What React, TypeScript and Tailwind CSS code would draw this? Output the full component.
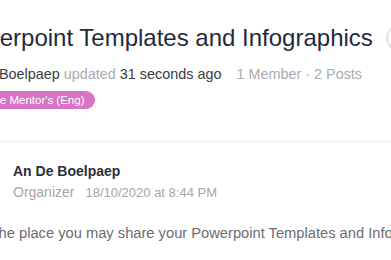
import React from "react";

export default function App() {
  return (
    <div
      className="w-[391px] h-[260px] overflow-hidden bg-white relative"
      style={{ fontFamily: "'Liberation Sans', Arial, sans-serif" }}
    >
      <div className="-ml-[47px] w-[700px]">
        <div className="flex items-center pt-[23px]">
          <h1 className="text-[24px] leading-[30px] font-normal text-[#1f2b3c] whitespace-nowrap">
            Powerpoint Templates and Infographics
          </h1>
          <div className="ml-[13px] w-[26px] h-[26px] rounded-full border-2 border-[#e4e4e4] shrink-0" />
        </div>
        <div className="mt-[11px] ml-[2px] flex items-center text-[14.4px] leading-[20px] whitespace-nowrap">
          <span className="text-[#3a3d42]">An De Boelpaep</span>
          <span className="ml-[4px] text-[#a9abb0]">updated</span>
          <span className="ml-[4px] text-[#3a3d42]">31 seconds ago</span>
          <span className="ml-[15px] text-[#a9abb0]">1 Member · 2 Posts</span>
        </div>
        <div className="mt-[7px] flex">
          <span className="rounded-full bg-[#d874c6] text-white text-[11.5px] leading-[18px] pl-[20px] pr-[10px] whitespace-nowrap">
            Online Mentor's (Eng)
          </span>
        </div>
        <div className="mt-[32px] h-px bg-[#ececec] w-[800px]" />
        <div className="flex pt-[19px] pl-[60px]">
          <div>
            <div className="text-[14px] leading-[20px] font-bold text-[#2c3038] whitespace-nowrap">
              An De Boelpaep
            </div>
            <div className="mt-[1px] flex items-baseline text-[#a4a6aa] whitespace-nowrap leading-[20px]">
              <span className="text-[14px]">Organizer</span>
              <span className="ml-[11px] text-[13px]">18/10/2020 at 8:44 PM</span>
            </div>
          </div>
        </div>
        <p className="mt-[19px] -ml-[5px] text-[14.7px] leading-[22px] text-[#6a6d72] whitespace-nowrap">
          This is the place you may share your Powerpoint Templates and Infographics
        </p>
      </div>
    </div>
  );
}
